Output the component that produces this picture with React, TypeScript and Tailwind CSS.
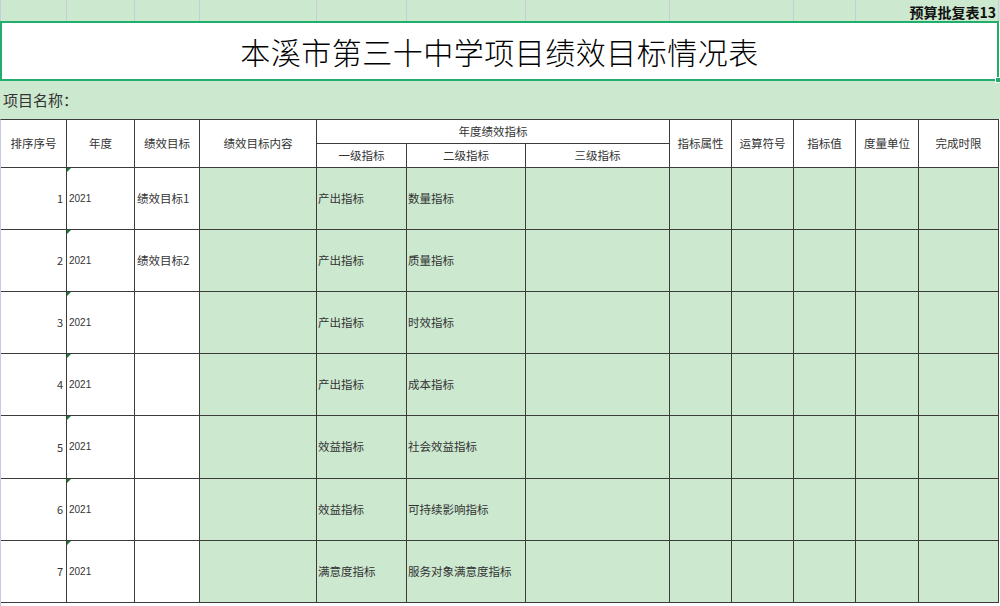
const cols = [66, 68, 65, 117, 90, 119, 144, 62, 62, 62, 63, 80];

const rows = [
  { no: 1, year: "2021", goal: "绩效目标1", l1: "产出指标", l2: "数量指标", h: "h-[62px]" },
  { no: 2, year: "2021", goal: "绩效目标2", l1: "产出指标", l2: "质量指标", h: "h-[62px]" },
  { no: 3, year: "2021", goal: "", l1: "产出指标", l2: "时效指标", h: "h-[62px]" },
  { no: 4, year: "2021", goal: "", l1: "产出指标", l2: "成本指标", h: "h-[62px]" },
  { no: 5, year: "2021", goal: "", l1: "效益指标", l2: "社会效益指标", h: "h-[63px]" },
  { no: 6, year: "2021", goal: "", l1: "效益指标", l2: "可持续影响指标", h: "h-[62px]" },
  { no: 7, year: "2021", goal: "", l1: "满意度指标", l2: "服务对象满意度指标", h: "h-[62px]" },
];

const line = "border-[#3c3c3c]";

export default function App() {
  return (
    <div className="w-[1000px] h-[606px] overflow-hidden bg-white font-['Noto_Sans_CJK_SC',sans-serif] text-[#333]">
      {/* column strip */}
      <div className="relative flex h-[21px] bg-[#cce8cf] border-l border-[#c6cbdd]">
        {cols.map((w, i) => (
          <div
            key={i}
            style={{ width: w }}
            className={`h-full shrink-0 ${i === 7 || i === 10 ? "" : "border-r border-[#c6cbdd]"}`}
          />
        ))}
        <span className="absolute right-[4px] top-[3px] text-[14px] leading-[18px] font-bold text-[#111]">
          预算批复表13
        </span>
      </div>

      {/* title */}
      <div className="relative w-[999px] h-[60px] border-2 border-[#1fae6b] bg-white flex items-center justify-center">
        <span className="text-[30px] leading-none font-light text-black tracking-[0.5px]">本溪市第三十中学项目绩效目标情况表</span>
        <span className="absolute -right-[3px] -bottom-[3px] w-[4px] h-[4px] bg-[#1fae6b] outline outline-1 outline-white" />
      </div>

      {/* project name */}
      <div className="h-[38px] bg-[#cce8cf] flex items-center pl-[3px] text-[15px] text-[#333]">项目名称：</div>

      {/* table */}
      <div
        className={`grid grid-cols-[66px_68px_65px_117px_90px_119px_144px_62px_62px_62px_63px_80px] border-t ${line} border-l-[#c6cbdd] border-l w-[999px] text-[11.5px] leading-none`}
      >
        <div className={`row-span-2 h-[48px] bg-white border-r border-b ${line} flex items-center justify-center`}>排序序号</div>
        <div className={`row-span-2 bg-white border-r border-b ${line} flex items-center justify-center`}>年度</div>
        <div className={`row-span-2 bg-white border-r border-b ${line} flex items-center justify-center`}>绩效目标</div>
        <div className={`row-span-2 bg-white border-r border-b ${line} flex items-center justify-center`}>绩效目标内容</div>
        <div className={`col-span-3 h-[24px] bg-white border-r border-b ${line} flex items-center justify-center`}>年度绩效指标</div>
        <div className={`row-span-2 bg-white border-r border-b ${line} flex items-center justify-center`}>指标属性</div>
        <div className={`row-span-2 bg-white border-r border-b ${line} flex items-center justify-center`}>运算符号</div>
        <div className={`row-span-2 bg-white border-r border-b ${line} flex items-center justify-center`}>指标值</div>
        <div className={`row-span-2 bg-white border-r border-b ${line} flex items-center justify-center`}>度量单位</div>
        <div className={`row-span-2 bg-white border-r border-b ${line} flex items-center justify-center`}>完成时限</div>
        <div className={`h-[24px] bg-white border-r border-b ${line} flex items-center justify-center`}>一级指标</div>
        <div className={`bg-white border-r border-b ${line} flex items-center justify-center`}>二级指标</div>
        <div className={`bg-white border-r border-b ${line} flex items-center justify-center`}>三级指标</div>

        {rows.map((r) => (
          <div key={r.no} className="contents">
            <div className={`${r.h} bg-white border-r border-b ${line} flex items-center justify-end pr-[3px] text-[11px]`}>{r.no}</div>
            <div className={`relative bg-white border-r border-b ${line} flex items-center pl-[2px] text-[10px] font-['Liberation_Sans',sans-serif]`}>
              <span className="absolute left-0 top-0 w-0 h-0 border-t-[4px] border-r-[4px] border-t-[#1a7a30] border-r-transparent" />
              {r.year}
            </div>
            <div className={`bg-white border-r border-b ${line} flex items-center pl-[2px]`}>{r.goal}</div>
            <div className={`bg-[#cce8cf] border-r border-b ${line}`} />
            <div className={`bg-[#cce8cf] border-r border-b ${line} flex items-center pl-[1px]`}>{r.l1}</div>
            <div className={`bg-[#cce8cf] border-r border-b ${line} flex items-center pl-[1px]`}>{r.l2}</div>
            <div className={`bg-[#cce8cf] border-r border-b ${line}`} />
            <div className={`bg-[#cce8cf] border-r border-b ${line}`} />
            <div className={`bg-[#cce8cf] border-r border-b ${line}`} />
            <div className={`bg-[#cce8cf] border-r border-b ${line}`} />
            <div className={`bg-[#cce8cf] border-r border-b ${line}`} />
            <div className={`bg-[#cce8cf] border-r border-b ${line}`} />
          </div>
        ))}
      </div>
      <div className="h-[10px] border-l border-[#c6cbdd]" />
    </div>
  );
}
